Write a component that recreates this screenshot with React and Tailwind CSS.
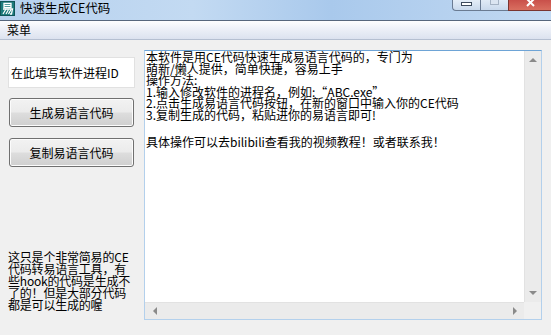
import React from "react";

const font = "font-['SimSun','Noto_Sans_CJK_SC',sans-serif]";

function AppIcon() {
  return (
    <svg width="15" height="15" viewBox="0 0 15 15" className="shrink-0">
      <rect x="0" y="0" width="15" height="15" fill="#1d7a7c" />
      <rect x="0.5" y="0.5" width="14" height="14" fill="none" stroke="#0f5557" />
      <path d="M4 2.5h7v4H4z" fill="none" stroke="#fff" strokeWidth="1.3" />
      <path d="M4 4.5h7" stroke="#fff" strokeWidth="1" />
      <path d="M3 8h9.5l-1 5H10" fill="none" stroke="#fff" strokeWidth="1.3" />
      <path d="M6 8l-3 5M8.5 8.5l-2.5 4.5M11 8.5l-2.5 4.5" stroke="#fff" strokeWidth="1.2" />
    </svg>
  );
}

function Triangle({ dir }) {
  const paths = {
    up: "M0 5 L4 1 L8 5 Z",
    down: "M0 1 L4 5 L8 1 Z",
    left: "M5 0 L1 4 L5 8 Z",
    right: "M1 0 L5 4 L1 8 Z",
  };
  const isV = dir === "up" || dir === "down";
  return (
    <svg width={isV ? 8 : 6} height={isV ? 6 : 8} viewBox={isV ? "0 0 8 6" : "0 0 6 8"}>
      <path d={paths[dir]} fill="#8a8a8a" />
    </svg>
  );
}

export default function App() {
  return (
    <div className={`w-[551px] h-[335px] overflow-hidden bg-[#f0f0f0] flex flex-col text-black ${font}`}>
      {/* Title bar */}
      <div className="h-[21px] shrink-0 flex items-start bg-[linear-gradient(90deg,#b6d1ee_0%,#c3daf2_35%,#a9c9ec_60%,#c2d9f2_100%)] border-b border-[#56667c]">
        <div className="flex items-center h-[16px] gap-[5px]">
          <AppIcon />
          <span className="text-[12.5px] leading-[16px] font-['Noto_Sans_CJK_SC',sans-serif] text-black">快速生成CE代码</span>
        </div>
        <div className="ml-auto flex items-start">
          <div className="w-[28px] h-[11px] rounded-bl-[4px] border-l border-b border-[#6a7b92] bg-[linear-gradient(180deg,#e4edf7,#c9d9ec)] flex items-start justify-center pt-[2px]">
            <div className="w-[11px] h-[4px] bg-white border border-[#3c4a5c]" />
          </div>
          <div className="w-[28px] h-[11px] border-l border-b border-[#6a7b92] bg-[linear-gradient(180deg,#e1ebf6,#c9d9ec)] flex items-start justify-center">
            <div className="w-[9px] h-[5px] border border-t-0 border-[#a5b3c4] bg-[#dbe5f1]" />
          </div>
          <div className="w-[43px] h-[11px] border-l border-b border-[#7a3530] bg-[linear-gradient(180deg,#c9504a,#d96f60)] flex items-start justify-center overflow-hidden">
            <svg width="9" height="9" viewBox="0 0 9 9" className="-mt-[2px]">
              <path d="M1 1 L8 8 M8 1 L1 8" stroke="#ffffff" strokeWidth="2" />
            </svg>
          </div>
        </div>
      </div>

      {/* Menu bar */}
      <div className="h-[19px] shrink-0 flex items-center pl-[7px] bg-[linear-gradient(180deg,#fdfdfe_0%,#eef1f8_40%,#dce2ef_100%)] border-b border-[#b5bfd1]">
        <span className="text-[12px] leading-[14px] font-['Noto_Sans_CJK_SC',sans-serif]">菜单</span>
      </div>

      {/* Body */}
      <div className="flex-1 flex">
        {/* Left column */}
        <div className="w-[144px] shrink-0 flex flex-col pl-[8px]">
          <div className="mt-[17px] w-[127px] h-[31px] bg-white border border-[#e1e1e1] flex items-center pl-[2px]">
            <span className="text-[12px] leading-[14px]">在此填写软件进程ID</span>
          </div>
          <button className="mt-[10px] ml-[1px] w-[125px] h-[29px] rounded-[3px] border border-[#707070] bg-[linear-gradient(180deg,#f2f2f2_0%,#ebebeb_48%,#dddddd_52%,#cfcfcf_100%)] shadow-[inset_0_0_0_1px_#fcfcfc] flex items-center justify-center">
            <span className="text-[12px] leading-[14px]">生成易语言代码</span>
          </button>
          <button className="mt-[11px] ml-[1px] w-[125px] h-[29px] rounded-[3px] border border-[#707070] bg-[linear-gradient(180deg,#f2f2f2_0%,#ebebeb_48%,#dddddd_52%,#cfcfcf_100%)] shadow-[inset_0_0_0_1px_#fcfcfc] flex items-center justify-center">
            <span className="text-[12px] leading-[14px]">复制易语言代码</span>
          </button>
          <div className="mt-[84px] text-[12px] leading-[12px] whitespace-nowrap tracking-[-0.2px]">
            <div>这只是个非常简易的CE</div>
            <div>代码转易语言工具，有</div>
            <div>些hook的代码是生成不</div>
            <div>了的！但是大部分代码</div>
            <div>都是可以生成的喔</div>
          </div>
        </div>

        {/* Text area */}
        <div className="mt-[10px] w-[398px] h-[270px] border border-[#b3d0ec] border-t-[#6ea4d6] bg-white flex flex-col">
          <div className="flex-1 flex min-h-0">
            <div className="flex-1 min-w-0 pl-[1px] text-[12px] leading-[11.5px] whitespace-nowrap">
              <div>本软件是用CE代码快速生成易语言代码的，专门为</div>
              <div>萌新/懒人提供，简单快捷，容易上手</div>
              <div>操作方法:</div>
              <div>1.输入修改软件的进程名，例如:“ABC.exe”</div>
              <div>2.点击生成易语言代码按钮，在新的窗口中输入你的CE代码</div>
              <div>3.复制生成的代码，粘贴进你的易语言即可!</div>
              <div className="mt-[16px]">具体操作可以去bilibili查看我的视频教程！或者联系我！</div>
            </div>
            <div className="w-[17px] shrink-0 bg-[#ebebeb] border-l border-[#e2e2e2] flex flex-col items-center justify-between pt-[6px] pb-[6px]">
              <Triangle dir="up" />
              <Triangle dir="down" />
            </div>
          </div>
          <div className="h-[17px] shrink-0 flex">
            <div className="flex-1 bg-[#ebebeb] border-t border-[#e2e2e2] flex items-center justify-between pl-[7px] pr-[6px]">
              <Triangle dir="left" />
              <Triangle dir="right" />
            </div>
            <div className="w-[17px] bg-[#f0f0f0]" />
          </div>
        </div>
      </div>
    </div>
  );
}
